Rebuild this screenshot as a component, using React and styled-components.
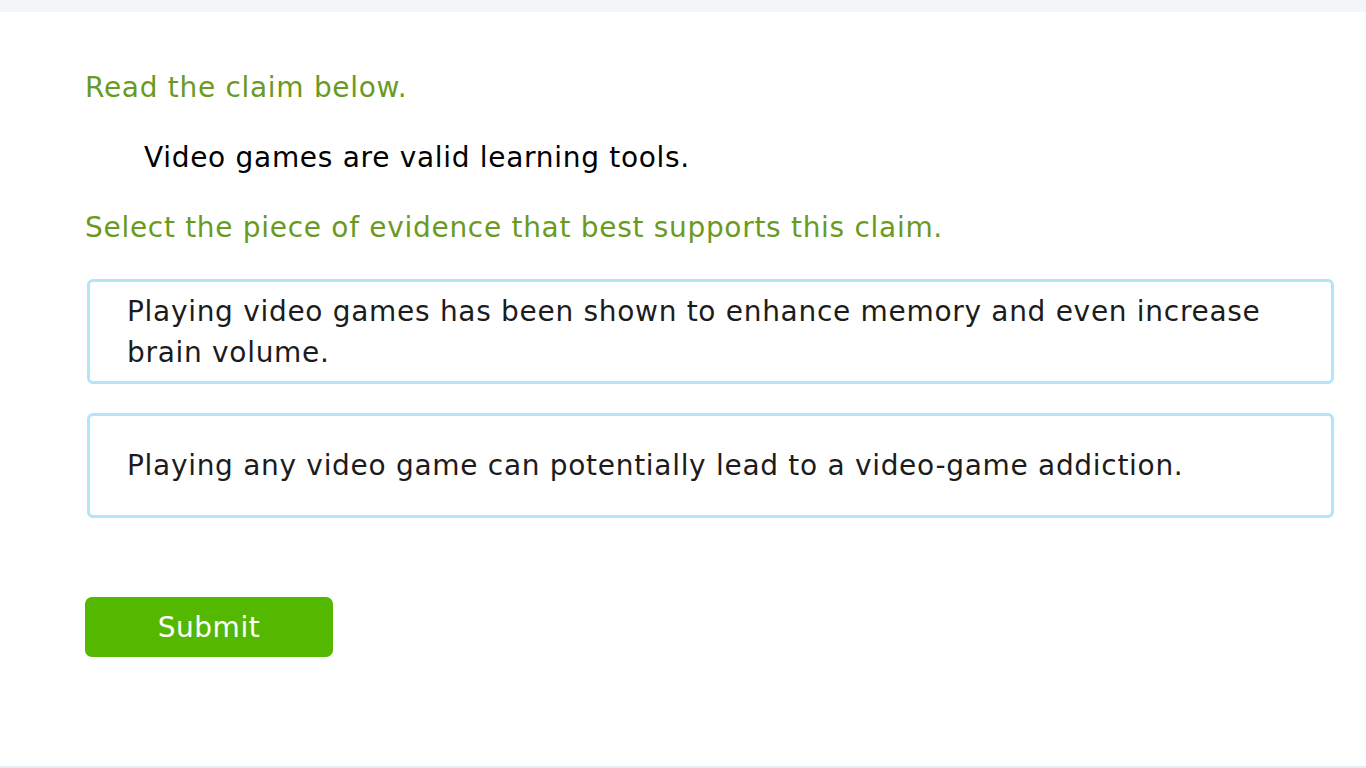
import styled, { createGlobalStyle } from 'styled-components';

const GlobalStyle = createGlobalStyle`
  html, body {
    margin: 0;
    padding: 0;
    background: #ffffff;
  }
  body {
    font-family: "DejaVu Sans", Verdana, sans-serif;
  }
`;

const choices = [
  'Playing video games has been shown to enhance memory and even increase brain volume.',
  'Playing any video game can potentially lead to a video-game addiction.',
];

export default function App() {
  return (
    <Page>
      <GlobalStyle />
      <TopBar />
      <Content>
        <Prompt>Read the claim below.</Prompt>
        <Claim>Video games are valid learning tools.</Claim>
        <Prompt>Select the piece of evidence that best supports this claim.</Prompt>
        <ChoiceList>
          {choices.map((text) => (
            <Choice key={text}>{text}</Choice>
          ))}
        </ChoiceList>
        <SubmitButton>Submit</SubmitButton>
      </Content>
      <BottomRule />
    </Page>
  );
}

const Page = styled.div`
  min-height: 768px;
  display: flex;
  flex-direction: column;
  background: #fff;
`;

const TopBar = styled.div`
  height: 12px;
  background: #f3f6f8;
`;

const Content = styled.main`
  flex: 1;
  padding: 58px 32px 0 85px;
  display: flex;
  flex-direction: column;
  align-items: flex-start;
`;

const Prompt = styled.p`
  margin: 0;
  font-size: 28px;
  line-height: 36px;
  letter-spacing: 0.7px;
  color: #6a9a1f;
`;

const Claim = styled.p`
  margin: 34px 0 34px 59px;
  font-size: 28px;
  line-height: 36px;
  letter-spacing: 0.7px;
  color: #000;
`;

const ChoiceList = styled.div`
  align-self: stretch;
  margin: 33px 0 0 2px;
  display: flex;
  flex-direction: column;
  gap: 29px;
`;

const Choice = styled.div`
  min-height: 105px;
  box-sizing: border-box;
  display: flex;
  align-items: center;
  padding: 8px 40px 8px 37px;
  border: 3px solid #b3e5f8;
  border-radius: 6px;
  font-size: 28px;
  line-height: 41px;
  letter-spacing: 0.7px;
  color: #1c1c1c;
  cursor: pointer;
`;

const SubmitButton = styled.button`
  margin-top: 79px;
  width: 248px;
  height: 60px;
  border: none;
  border-radius: 7px;
  background: #54b800;
  color: #fff;
  font-family: inherit;
  font-size: 28px;
  letter-spacing: 0.5px;
  cursor: pointer;
`;

const BottomRule = styled.div`
  height: 2px;
  background: #e2eef4;
`;
